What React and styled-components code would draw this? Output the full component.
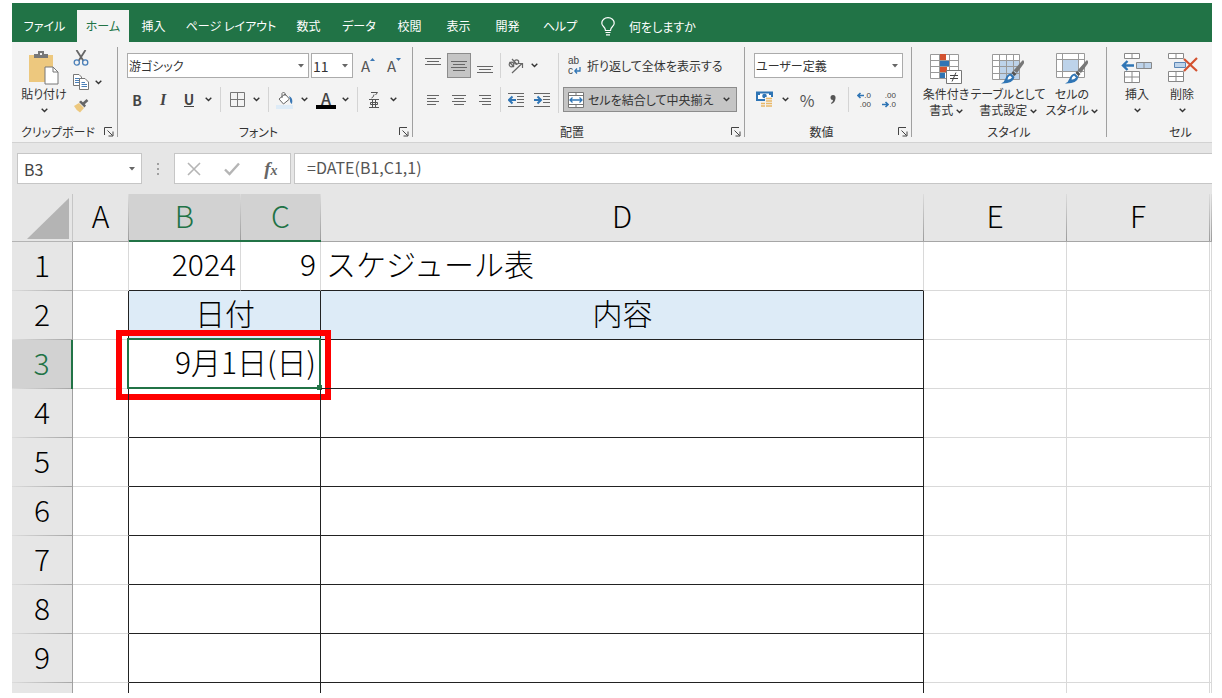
import { useState } from "react";
import styled, { createGlobalStyle, css } from "styled-components";

const TABS = [
  { name: "ファイル", width: 65 },
  { name: "ホーム", width: 52 },
  { name: "挿入", width: 49 },
  { name: "ページ レイアウト", width: 106 },
  { name: "数式", width: 49 },
  { name: "データ", width: 52 },
  { name: "校閲", width: 49 },
  { name: "表示", width: 49 },
  { name: "開発", width: 49 },
  { name: "ヘルプ", width: 56 },
];

// the last row is only partly in view and has no number yet
const EMPTY_ROWS = ["4", "5", "6", "7", "8", "9", ""];

export default function App() {
  const [tab, setTab] = useState("ホーム");
  const [formula, setFormula] = useState("=DATE(B1,C1,1)");

  return (
    <>
      <GlobalStyle />
      <Window>
        <TabBar>
          {TABS.map((item) => (
            <Tab
              key={item.name}
              $width={item.width}
              $active={tab === item.name}
              onClick={() => setTab(item.name)}
            >
              {item.name}
            </Tab>
          ))}
          <TellMe>
            <BulbIcon />
            何をしますか
          </TellMe>
        </TabBar>
        <Ribbon>
          <ClipboardGroup />
          <FontGroup />
          <AlignGroup />
          <NumberGroup />
          <StyleGroup />
          <CellGroup />
        </Ribbon>
        <FormulaBar>
          <NameBox>
            <NameInput aria-label="名前ボックス" defaultValue="B3" />
            <DownArrow />
          </NameBox>
          <Dots>
            <i />
            <i />
            <i />
          </Dots>
          <FormulaButtons>
            <FormulaButton aria-label="キャンセル">
              <svg width="14" height="14" viewBox="0 0 14 14">
                <path d="M1 1L13 13M13 1L1 13" stroke="#b5b5b5" strokeWidth="1.6" />
              </svg>
            </FormulaButton>
            <FormulaButton aria-label="入力">
              <svg width="16" height="14" viewBox="0 0 16 14">
                <path d="M1 7.5L5.5 12L15 1.5" fill="none" stroke="#b5b5b5" strokeWidth="2.4" />
              </svg>
            </FormulaButton>
            <FormulaButton aria-label="関数の挿入">
              <Fx>
                f<small>x</small>
              </Fx>
            </FormulaButton>
          </FormulaButtons>
          <FormulaInput
            aria-label="数式バー"
            value={formula}
            onChange={(e) => setFormula(e.target.value)}
          />
        </FormulaBar>
        <Sheet />
      </Window>
    </>
  );
}

function Group({ label, width, launcher, children }) {
  return (
    <GroupBox $width={width}>
      <GroupBody>{children}</GroupBody>
      <GroupFooter>
        <GroupLabel>{label}</GroupLabel>
        {launcher && (
          <Launcher aria-label={`${label}の設定`}>
            <svg width="10" height="10" viewBox="0 0 10 10">
              <path d="M.5 8V.5H8M3.5 3.5L8.5 8.5M9 4.5V9H4.5" fill="none" stroke="#444" />
            </svg>
          </Launcher>
        )}
      </GroupFooter>
    </GroupBox>
  );
}

function ClipboardGroup() {
  return (
    <Group label="クリップボード" width={106} launcher>
      <PasteButton $width={58}>
        <svg width="32" height="34" viewBox="0 0 32 34">
          <path d="M1 4H25V31H1Z" fill="#edc87e" />
          <path d="M6 7V3H10V0H16V3H20V7Z" fill="#777" />
          <path d="M12 2H14V4H12Z" fill="#f3f3f3" />
          <path d="M17 16H25L30 21V33H17Z" fill="#fff" stroke="#777" />
          <path d="M25 16V21H30" fill="none" stroke="#777" />
        </svg>
        <span>貼り付け</span>
        <Chevron />
      </PasteButton>
      <SmallStack>
        <IconButton $width={16} aria-label="切り取り">
          <svg width="16" height="16" viewBox="0 0 16 16" fill="none">
            <path d="M3.500 0L10.500 11M12.500 0L5.500 11" stroke="#666" strokeWidth="1.800" />
            <circle cx="3.800" cy="12.500" r="2.600" stroke="#4a7fb8" strokeWidth="1.300" />
            <circle cx="12.200" cy="12.500" r="2.600" stroke="#4a7fb8" strokeWidth="1.300" />
          </svg>
        </IconButton>
        <SplitRow>
          <IconButton $width={16} aria-label="コピー">
            <svg width="16" height="16" viewBox="0 0 16 16" fill="#fff" stroke="#777">
              <path d="M.5 .5H6L8.500 3V11.500H.5Z" />
              <path d="M2 4.500H7M2 6.500H7M2 8.500H7" stroke="#4a7fb8" />
              <path d="M6.500 4.500H12L15.500 8V15.500H6.500Z" />
              <path d="M8.500 8.500H12M8.500 10.500H14M8.500 12.500H14" stroke="#4a7fb8" />
            </svg>
          </IconButton>
          <ChevronButton aria-label="コピーのオプション" />
        </SplitRow>
        <IconButton $width={16} aria-label="書式のコピー">
          <svg width="16" height="14" viewBox="0 0 16 14">
            <path d="M1 7L6 4L11 9L7 13.500Q3 11 1 7Z" fill="#edc87e" />
            <path d="M6 3L8 1.500L13 6.500L11.500 8.500Z" fill="#666" />
            <path d="M10 5L14.500 1" stroke="#666" strokeWidth="2.600" />
          </svg>
        </IconButton>
      </SmallStack>
    </Group>
  );
}

function FontGroup() {
  return (
    <Group label="フォント" width={295} launcher>
      <Column $left={9}>
        <Row $gap={2}>
          <Dropdown label="フォント名" value="游ゴシック" width={182} />
          <Dropdown label="フォント サイズ" value="11" width={42} large />
          <IconButton $width={26} aria-label="フォント サイズの拡大">
            <SizeLetter>A</SizeLetter>
            <svg width="5" height="15" viewBox="0 0 5 15">
              <path d="M0 3L2.500 0L5 3Z" fill="#3b78b5" />
            </svg>
          </IconButton>
          <IconButton $width={22} aria-label="フォント サイズの縮小">
            <SizeLetter>A</SizeLetter>
            <svg width="5" height="15" viewBox="0 0 5 15">
              <path d="M0 0H5L2.500 3Z" fill="#3b78b5" />
            </svg>
          </IconButton>
        </Row>
        <Row $gap={6}>
          <IconButton $width={20} aria-label="太字">
            <Letter $bold>B</Letter>
          </IconButton>
          <IconButton $width={20} aria-label="斜体">
            <Letter $italic>I</Letter>
          </IconButton>
          <SplitRow>
            <IconButton $width={20} aria-label="下線">
              <Letter $underline>U</Letter>
            </IconButton>
            <ChevronButton aria-label="下線のオプション" />
          </SplitRow>
          <Divider />
          <SplitRow>
            <IconButton $width={20} aria-label="罫線">
              <svg width="15" height="15" viewBox="0 0 15 15" fill="none" stroke="#777">
                <path d="M.5 .5H14.500V14.500H.5ZM7.500 .5V14.500M.5 7.500H14.500" />
              </svg>
            </IconButton>
            <ChevronButton aria-label="罫線のオプション" />
          </SplitRow>
          <Divider />
          <SplitRow>
            <IconButton $width={20} aria-label="塗りつぶしの色">
              <svg width="18" height="18" viewBox="0 0 18 18">
                <path d="M0 14H17V18H0Z" fill="#ddebf7" />
                <path d="M3 8L9 3L13.500 8L7.500 13Z" fill="#fff" stroke="#666" />
                <path d="M6 7V2.500Q7.500 -.5 9 2.500V5" fill="none" stroke="#666" />
                <path d="M13 5Q17.500 7 16 13Q13.500 12 14 8Z" fill="#3b78b5" />
              </svg>
            </IconButton>
            <ChevronButton aria-label="塗りつぶしのオプション" />
          </SplitRow>
          <SplitRow>
            <ColorButton aria-label="フォントの色">A</ColorButton>
            <ChevronButton aria-label="フォントの色のオプション" />
          </SplitRow>
          <Divider />
          <SplitRow>
            <IconButton $width={20} aria-label="ふりがな">
              <svg width="10" height="16" viewBox="0 0 10 16" fill="none" stroke="#555">
                <path d="M2 .5H8.500L6.500 3M5 2.500Q5 5 2.500 6" />
                <path d="M0 7.500H10M1.500 10.500V12.500H8.500V10.500ZM3.500 7.500V15M6.500 7.500V15M0 15.500H10" />
              </svg>
            </IconButton>
            <ChevronButton aria-label="ふりがなのオプション" />
          </SplitRow>
        </Row>
      </Column>
    </Group>
  );
}

function Lines({ d }) {
  return (
    <svg width="16" height="16" viewBox="0 0 16 16" stroke="#666">
      <path d={d} />
    </svg>
  );
}

function Indent({ flip }) {
  return (
    <svg width="16" height="14" viewBox="0 0 16 14" fill="none">
      <path d="M0 .5H16M9 3.500H16M9 6.500H16M9 9.500H16M0 13.500H16" stroke="#666" />
      <path
        d={flip ? "M0 7H6M3.500 3.500L7 7L3.500 10.500" : "M8 7H2M4.500 3.500L1 7L4.500 10.500"}
        stroke="#2f75b5"
        strokeWidth="2"
      />
    </svg>
  );
}

function AlignGroup() {
  return (
    <Group label="配置" width={332} launcher>
      <Column $left={8}>
        <Row $gap={2}>
          <IconButton $width={24} aria-label="上揃え">
            <Lines d="M0 .5H16M2 3.500H14M0 6.500H16" />
          </IconButton>
          <IconButton $width={24} $pressed aria-label="上下中央揃え">
            <Lines d="M0 3.500H16M2 6.500H14M0 9.500H16M2 12.500H14" />
          </IconButton>
          <IconButton $width={24} aria-label="下揃え">
            <Lines d="M0 8.500H16M2 11.500H14M0 14.500H16" />
          </IconButton>
          <Divider $side={1} />
          <IconButton $width={24} aria-label="方向">
            <svg width="18" height="16" viewBox="0 0 18 16" fill="none" stroke="#666" strokeWidth="1.200">
              <ellipse cx="4.500" cy="6.500" rx="2.300" ry="2.300" />
              <path d="M2.500 4L7 9" />
              <path d="M5 1L10 6.500" />
              <ellipse cx="9.500" cy="4" rx="2.200" ry="2.200" />
              <path d="M5 15L15 5.500M11 5.500H15.500V10" />
            </svg>
          </IconButton>
          <ChevronButton $tight aria-label="方向のオプション" />
        </Row>
        <Row $gap={2}>
          <IconButton $width={24} aria-label="左揃え">
            <Lines d="M2 3.500H14M2 6.500H11M2 9.500H14M2 12.500H11" />
          </IconButton>
          <IconButton $width={24} aria-label="中央揃え">
            <Lines d="M1 3.500H15M3 6.500H13M1 9.500H15M3 12.500H13" />
          </IconButton>
          <IconButton $width={24} aria-label="右揃え">
            <Lines d="M2 3.500H14M5 6.500H14M2 9.500H14M5 12.500H14" />
          </IconButton>
          <Divider $side={1} />
          <IconButton $width={24} aria-label="インデントを減らす">
            <Indent />
          </IconButton>
          <IconButton $width={24} aria-label="インデントを増やす">
            <Indent flip />
          </IconButton>
        </Row>
      </Column>
      <TallDivider />
      <Column>
        <WideButton>
          <WrapMark>
            <span>ab</span>
            <span>
              c
              <svg width="7" height="7" viewBox="0 0 7 7" fill="none" stroke="#2f75b5" strokeWidth="1.300">
                <path d="M6 0V4H1M3 1.500L.8 4L3 6.500" />
              </svg>
            </span>
          </WrapMark>
          折り返して全体を表示する
        </WideButton>
        <WideButton $pressed>
          <svg width="16" height="16" viewBox="0 0 16 16" fill="#fff" stroke="#777">
            <path d="M.5 .5H15.500V15.500H.5Z" />
            <path d="M.5 3.500H15.500M.5 12.500H15.500M8 .5V3.500M8 12.500V15.500" />
            <path d="M2 8H14M4.500 5.500L2 8L4.500 10.500M11.500 5.500L14 8L11.500 10.500" fill="none" stroke="#2f75b5" strokeWidth="1.300" />
          </svg>
          <span>セルを結合して中央揃え</span>
          <Chevron />
        </WideButton>
      </Column>
    </Group>
  );
}

function NumberGroup() {
  return (
    <Group label="数値" width={167} launcher>
      <Column $left={9}>
        <Row>
          <Dropdown label="表示形式" value="ユーザー定義" width={149} />
        </Row>
        <Row $gap={5}>
          <SplitRow>
            <IconButton $width={22} aria-label="通貨表示形式">
              <svg width="18" height="17" viewBox="0 0 18 17">
                <path d="M0 .5H17V10H0Z" fill="#2f75b5" />
                <path d="M2 2.500H15V8H2Z" fill="#fff" />
                <circle cx="8.500" cy="5" r="2.300" fill="#2f75b5" />
                <path d="M1 2H4V4H1ZM13 2H16V4H13Z" fill="#2f75b5" />
                <path d="M9 6H17V16H5V11H9Z" fill="#f3f3f3" />
                <path d="M10 7.500H16M10 10H16M10 12.500H16M10 15H16M5 12.500H9M5 15H9" stroke="#e9b867" strokeWidth="1.600" />
              </svg>
            </IconButton>
            <ChevronButton aria-label="通貨のオプション" />
          </SplitRow>
          <IconButton $width={22} aria-label="パーセント スタイル">
            <Percent>%</Percent>
          </IconButton>
          <IconButton $width={20} aria-label="桁区切りスタイル">
            <svg width="6" height="9" viewBox="0 0 6 9">
              <path d="M3 0Q6 0 5.500 3.500Q5 7.500 1.500 9L1 8Q3 7 3 5Q.5 5 .5 2.500Q.5 0 3 0Z" fill="#555" />
            </svg>
          </IconButton>
          <Divider />
          <IconButton $width={20} aria-label="小数点以下の表示桁数を増やす">
            <Decimals>
              <span>
                <SmallArrow left />
                .0
              </span>
              <span>.00</span>
            </Decimals>
          </IconButton>
          <IconButton $width={20} aria-label="小数点以下の表示桁数を減らす">
            <Decimals>
              <span>.00</span>
              <span>
                <SmallArrow />
                .0
              </span>
            </Decimals>
          </IconButton>
        </Row>
      </Column>
    </Group>
  );
}

function StyleGroup() {
  return (
    <Group label="スタイル" width={195}>
      <BigRow>
        <BigButton $width={54}>
          <svg width="32" height="32" viewBox="0 0 32 32">
            <path d="M.5 1.500H28.500V25.500H.5Z" fill="#fff" stroke="#999" />
            <path d="M10 1H16V7H10Z" fill="#d35230" />
            <path d="M10 7H19V13H10Z" fill="#2f75b5" />
            <path d="M10 13H17V19H10Z" fill="#d35230" />
            <path d="M10 19H15V25H10Z" fill="#2f75b5" />
            <path d="M.5 7.500H28.500M.5 13.500H28.500M.5 19.500H28.500M9.500 1V26M19.500 1V26" stroke="#999" fill="none" />
            <path d="M16.500 17.500H31.500V30.500H16.500Z" fill="#fff" stroke="#777" />
            <path d="M20 22.500H28M20 25.500H28M26 19.500L22 28.500" stroke="#444" />
          </svg>
          <span>条件付き</span>
          <span>
            書式 <Chevron />
          </span>
        </BigButton>
        <BigButton $width={70}>
          <svg width="32" height="32" viewBox="0 0 32 32">
            <path d="M.5 1.500H27.500V26.500H.5Z" fill="#fff" />
            <path d="M7 8H28V27H7Z" fill="#bdd3ea" />
            <path d="M.5 1.500H27.500V26.500H.5ZM.5 7.500H27.500M.5 13.500H27.500M.5 20.500H27.500M7.500 1V26M14.500 1V26M21.500 1V26" stroke="#999" fill="none" />
            <Brush />
          </svg>
          <span>テーブルとして</span>
          <span>
            書式設定 <Chevron />
          </span>
        </BigButton>
        <BigButton $width={58}>
          <svg width="32" height="32" viewBox="0 0 32 32">
            <path d="M.5 .5H28.500V24.500H.5Z" fill="#fff" />
            <path d="M7 6H22V19H7Z" fill="#bdd3ea" />
            <path d="M.5 .5H28.500V24.500H.5ZM.5 6.500H28.500M.5 18.500H28.500M6.500 0V24M22.500 0V24" stroke="#999" fill="none" />
            <Brush />
          </svg>
          <span>セルの</span>
          <span>
            スタイル <Chevron />
          </span>
        </BigButton>
      </BigRow>
    </Group>
  );
}

function CellGroup() {
  return (
    <Group label="セル" width={148}>
      <BigRow>
        <BigButton $width={46}>
          <svg width="32" height="32" viewBox="0 0 32 32" fill="#fff" stroke="#888">
            <path d="M3.500 .5H18.500V5.500H3.500ZM11 .5V5.500" />
            <path d="M15.500 9.500H30.500V15.500H15.500ZM23 9.500V15.500" fill="#bdd3ea" />
            <path d="M3.500 18.500H18.500V29.500H3.500ZM11 18.500V29.500M3.500 24H18.500" />
            <path d="M13 12.500H2M6.500 8L2 12.500L6.500 17" fill="none" stroke="#2f75b5" strokeWidth="2.400" />
          </svg>
          <span>挿入</span>
          <Chevron />
        </BigButton>
        <BigButton $width={44}>
          <svg width="32" height="32" viewBox="0 0 32 32" fill="#fff" stroke="#888">
            <path d="M2.500 .5H17.500V5.500H2.500ZM10 .5V5.500" />
            <path d="M8.500 9.500H19.500V14.500H8.500Z" fill="#bdd3ea" stroke="#5b86b5" />
            <path d="M2.500 18.500H17.500V28.500H2.500ZM10 18.500V28.500M2.500 23.500H17.500" />
            <path d="M18 6L31 18M31 5L18 18" fill="none" stroke="#d35230" strokeWidth="2.200" />
          </svg>
          <span>削除</span>
          <Chevron />
        </BigButton>
      </BigRow>
    </Group>
  );
}

function Brush() {
  return (
    <g stroke="none">
      <path d="M31 7Q33 9 31.500 11L25 20L21.500 17.500L29 9Z" fill="#777" />
      <path d="M21 18L24.500 21L22.500 23L19.500 20Z" fill="#555" />
      <path d="M19 20.500L22.500 24Q21 31 9 30.500Q12.500 29 13.500 25.500Q15 21 19 20.500Z" fill="#2f75b5" />
      <path d="M18 22.500L20 24.500Q18 27 15.500 26.500Q15.500 24 18 22.500Z" fill="#fff" />
    </g>
  );
}

function SmallArrow({ left }) {
  return (
    <svg width="7" height="7" viewBox="0 0 7 7" fill="none" stroke="#2f75b5" strokeWidth="1.600">
      <path d={left ? "M7 3.500H1M3.500 1L1 3.500L3.500 6" : "M0 3.500H6M3.500 1L6 3.500L3.500 6"} />
    </svg>
  );
}

function BulbIcon() {
  return (
    <svg width="14" height="19" viewBox="0 0 14 19" fill="none" stroke="#fff" strokeWidth="1.200">
      <path d="M4.500 13.500Q4.500 11.500 2.500 9.500Q.8 7.800 .8 6.200A6.200 5.600 0 0 1 13.200 6.200Q13.200 7.800 11.500 9.500Q9.500 11.500 9.500 13.500ZM4.500 15.500H9.500M5 17.800H9" />
    </svg>
  );
}

function Chevron() {
  return (
    <svg width="7" height="5" viewBox="0 0 7 5">
      <path d="M.7 .8L3.500 3.600L6.300 .8" fill="none" stroke="#333" strokeWidth="1.400" />
    </svg>
  );
}

function ChevronButton(props) {
  return (
    <ChevronBox {...props}>
      <Chevron />
    </ChevronBox>
  );
}

function DownArrow() {
  return (
    <svg width="6" height="4" viewBox="0 0 6 4">
      <path d="M0 0H6L3 3.500Z" fill="#666" />
    </svg>
  );
}

function Dropdown({ label, value, width, large }) {
  return (
    <SelectBox $width={width}>
      <Select aria-label={label} defaultValue={value} $large={large}>
        <option>{value}</option>
      </Select>
      <DownArrow />
    </SelectBox>
  );
}

function Sheet() {
  return (
    <SheetArea>
      <Grid>
        <colgroup>
          <Col $width={61} />
          <Col $width={56} />
          <Col $width={112} />
          <Col $width={80} />
          <Col $width={603} />
          <Col $width={143} />
          <Col $width={143} />
          <col />
        </colgroup>
        <thead>
          <tr>
            <Corner>
              <svg width="42" height="41" viewBox="0 0 42 41">
                <path d="M42 0V41H0Z" fill="#b4b4b4" />
              </svg>
            </Corner>
            <ColHead>A</ColHead>
            <ColHead $selected>B</ColHead>
            <ColHead $selected>C</ColHead>
            <ColHead>D</ColHead>
            <ColHead>E</ColHead>
            <ColHead>F</ColHead>
            <ColHead />
          </tr>
        </thead>
        <tbody>
          <tr>
            <RowHead>1</RowHead>
            <Cell />
            <Cell $align="right" $lineBottom>
              2024
            </Cell>
            <Cell $align="right" $lineBottom>
              9
            </Cell>
            <Cell $lineBottom>スケジュール表</Cell>
            <Cell />
            <Cell />
            <Cell />
          </tr>
          <tr>
            <RowHead>2</RowHead>
            <Cell $lineRight />
            <Cell colSpan={2} $align="center" $filled $lineRight $lineBottom>
              日付
            </Cell>
            <Cell $align="center" $filled $lineRight $lineBottom>
              内容
            </Cell>
            <Cell />
            <Cell />
            <Cell />
          </tr>
          <tr>
            <RowHead $selected>3</RowHead>
            <Cell $lineRight />
            <Cell colSpan={2} $align="right" $lineRight $lineBottom>
              9月1日(日)
              <Selection />
              <Highlight />
            </Cell>
            <Cell $lineRight $lineBottom />
            <Cell />
            <Cell />
            <Cell />
          </tr>
          {EMPTY_ROWS.map((row) => (
            <tr key={row}>
              <RowHead>{row}</RowHead>
              <Cell $lineRight />
              <Cell colSpan={2} $lineRight $lineBottom />
              <Cell $lineRight $lineBottom />
              <Cell />
              <Cell />
              <Cell />
            </tr>
          ))}
        </tbody>
      </Grid>
    </SheetArea>
  );
}

const GlobalStyle = createGlobalStyle`
  * {
    box-sizing: border-box;
  }
  body {
    margin: 0;
    background: #fff;
    color: #333;
    font-family: "Noto Sans CJK JP", "Noto Sans", sans-serif;
    font-size: 12px;
  }
  button, input, select {
    margin: 0;
    padding: 0;
    border: 0;
    background: none;
    color: inherit;
    font: inherit;
    font-feature-settings: inherit;
  }
  svg {
    flex: none;
  }
`;

const Window = styled.div`
  display: flex;
  flex-direction: column;
  height: 100vh;
  padding: 3px 10px 5px 12px;
  overflow: hidden;
  font-feature-settings: "palt";
`;

const TabBar = styled.nav`
  display: flex;
  align-items: flex-end;
  flex: none;
  height: 39px;
  background: #217346;
  color: #fff;
`;

const Tab = styled.button`
  width: ${(props) => props.$width}px;
  height: 32px;
  line-height: 30px;
  white-space: nowrap;
  ${(props) =>
    props.$active &&
    css`
      background: #f3f3f3;
      color: #217346;
    `}
`;

const TellMe = styled.button`
  display: flex;
  align-items: center;
  gap: 14px;
  height: 32px;
  padding-left: 13px;
`;

const Ribbon = styled.div`
  display: flex;
  flex: none;
  height: 101px;
  padding: 5px 0;
  overflow: hidden;
  background: #f3f3f3;
  border-bottom: 1px solid #d2d2d2;
`;

const GroupBox = styled.section`
  display: flex;
  flex-direction: column;
  flex: none;
  width: ${(props) => props.$width}px;
  border-right: 1px solid #a0a0a0;
`;

const GroupBody = styled.div`
  display: flex;
  flex: 1;
  min-height: 0;
`;

const GroupFooter = styled.div`
  display: flex;
  align-items: center;
  height: 10px;
`;

const GroupLabel = styled.span`
  flex: 1;
  text-align: center;
  line-height: 10px;
`;

const Launcher = styled.button`
  display: flex;
  margin-right: 3px;
`;

const Column = styled.div`
  display: flex;
  flex-direction: column;
  gap: 9px;
  padding: 6px 0 0 ${(props) => props.$left || 0}px;
`;

const Row = styled.div`
  display: flex;
  align-items: center;
  gap: ${(props) => props.$gap || 0}px;
  height: 25px;
`;

const SplitRow = styled.div`
  display: flex;
  align-items: center;
  gap: 3px;
`;

const Divider = styled.span`
  width: 1px;
  height: 25px;
  margin: 0 ${(props) => props.$side || 0}px;
  background: #d4d4d4;
`;

const TallDivider = styled.span`
  width: 1px;
  height: 60px;
  margin: 6px 4px 0;
  background: #d4d4d4;
`;

const IconButton = styled.button`
  display: flex;
  align-items: center;
  justify-content: center;
  width: ${(props) => props.$width}px;
  height: 25px;
  ${(props) =>
    props.$pressed &&
    css`
      background: #c5c5c5;
      border: 1px solid #8c8c8c;
    `}
`;

const ChevronBox = styled.button`
  display: flex;
  align-items: center;
  justify-content: center;
  width: ${(props) => (props.$tight ? 8 : 12)}px;
  height: 25px;
`;

const Letter = styled.span`
  color: #444;
  font-size: 14px;
  font-weight: 700;
  line-height: 16px;
  ${(props) =>
    props.$italic &&
    css`
      font-family: "Liberation Serif", serif;
      font-size: 16px;
      font-style: italic;
    `}
  ${(props) =>
    props.$underline &&
    css`
      border-bottom: 1px solid #444;
      line-height: 14px;
    `}
`;

const SizeLetter = styled.span`
  color: #555;
  font-size: 15px;
  line-height: 20px;
`;

const ColorButton = styled.button`
  width: 20px;
  height: 19px;
  border-bottom: 4px solid #000;
  color: #444;
  font-size: 16px;
  font-weight: 500;
  line-height: 14px;
`;

const Percent = styled.span`
  font-size: 16px;
  line-height: 20px;
  color: #555;
`;

const Decimals = styled.span`
  display: flex;
  flex-direction: column;
  align-items: flex-end;
  color: #444;
  font-family: "Liberation Sans", sans-serif;
  font-size: 8px;
  line-height: 9px;

  span {
    display: flex;
    align-items: center;
  }
`;

const SelectBox = styled.div`
  display: grid;
  grid-template-columns: 1fr 14px;
  align-items: center;
  width: ${(props) => props.$width}px;
  height: 25px;
  border: 1px solid #ababab;
  background: #fff;

  svg {
    grid-area: 1 / 2;
    justify-self: center;
    pointer-events: none;
  }
`;

const Select = styled.select`
  grid-area: 1 / 1 / 2 / 3;
  height: 23px;
  padding: 0 1px;
  appearance: none;
  font-size: ${(props) => (props.$large ? 14 : 12)}px;
`;

const WideButton = styled.button`
  display: flex;
  align-items: center;
  gap: 4px;
  width: 174px;
  height: 25px;
  padding: 0 6px 0 4px;
  border: 1px solid transparent;
  white-space: nowrap;

  span + svg {
    margin-left: auto;
  }
  ${(props) =>
    props.$pressed &&
    css`
      background: #c5c5c5;
      border-color: #8c8c8c;
    `}
`;

const WrapMark = styled.span`
  display: flex;
  flex-direction: column;
  width: 15px;
  color: #444;
  font-family: "Liberation Sans", sans-serif;
  font-size: 10px;
  line-height: 10px;
  text-align: left;

  span {
    display: flex;
    align-items: center;
    gap: 1px;
    height: 10px;
  }
`;

const BigRow = styled.div`
  display: flex;
  padding-left: 7px;
  padding-top: 4px;
`;

const BigButton = styled.button`
  display: flex;
  flex-direction: column;
  align-items: center;
  flex: none;
  width: ${(props) => props.$width}px;
  height: 72px;
  padding-top: 2px;
  line-height: 16px;
  white-space: nowrap;

  > svg + span {
    margin-top: 1px;
  }
  > span svg {
    vertical-align: middle;
  }
  > span + svg {
    margin-top: 6px;
  }
`;

const PasteButton = styled(BigButton)`
  margin: 2px 0 0 3px;
`;

const SmallStack = styled.div`
  display: flex;
  flex-direction: column;
  gap: 2px;

  button {
    height: 22px;
  }
`;

const FormulaBar = styled.div`
  display: flex;
  flex: none;
  height: 51px;
  padding: 10px 0 10px 5px;
  background: #e6e6e6;
  color: #444;
  font-size: 16px;
`;

const NameBox = styled.div`
  display: flex;
  align-items: center;
  width: 125px;
  padding: 0 6px;
  border: 1px solid #c6c6c6;
  background: #fff;
`;

const NameInput = styled.input`
  flex: 1;
  min-width: 0;
`;

const Dots = styled.span`
  display: flex;
  flex-direction: column;
  align-items: center;
  justify-content: center;
  gap: 3px;
  width: 32px;

  i {
    width: 2px;
    height: 2px;
    background: #a0a0a0;
  }
`;

const FormulaButtons = styled.div`
  display: flex;
  align-items: center;
  justify-content: space-around;
  width: 117px;
  margin-right: 3px;
  border: 1px solid #c6c6c6;
  background: #fff;
`;

const FormulaButton = styled.button`
  display: flex;
  align-items: center;
  justify-content: center;
  width: 32px;
  height: 26px;
`;

const Fx = styled.span`
  color: #666;
  font-family: "Liberation Serif", serif;
  font-size: 19px;
  font-style: italic;
  font-weight: 700;

  small {
    font-size: 14px;
  }
`;

const FormulaInput = styled.input`
  flex: 1;
  min-width: 0;
  padding: 0 0 3px 12px;
  border: 1px solid #c6c6c6;
  border-right: 0;
  background: #fff;
  color: #555;
`;

const SheetArea = styled.div`
  flex: 1;
  min-height: 0;
  overflow: hidden;
  background: #fff;
`;

const Grid = styled.table`
  width: 100%;
  table-layout: fixed;
  border-collapse: separate;
  border-spacing: 0;
  color: #000;
  font-size: 30px;
  font-weight: 300;
  line-height: 40px;
  font-feature-settings: normal;
`;

const Col = styled.col`
  width: ${(props) => props.$width}px;
`;

const Corner = styled.td`
  height: 48px;
  padding: 0 3px 2px 0;
  border-right: 1px solid #c6c6c6;
  border-bottom: 1px solid #b4b4b4;
  background: #e6e6e6;
  line-height: 0;
  text-align: right;
  vertical-align: bottom;
`;

const ColHead = styled.th`
  height: 48px;
  padding: 0 1px 5px 0;
  border-bottom: 1px solid #a6a6a6;
  background: linear-gradient(#dcdcdc, #9c9c9c) right / 1px 100% no-repeat #e6e6e6;
  font-weight: 300;
  ${(props) =>
    props.$selected &&
    css`
      border-bottom: 2px solid #217346;
      background-color: #d2d2d2;
      color: #217346;
    `}
`;

const RowHead = styled.th`
  height: 49px;
  padding: 0 0 6px;
  border-right: 1px solid #a0a0a0;
  background: linear-gradient(90deg, #dcdcdc, #a6a6a6) bottom / 100% 1px no-repeat #e6e6e6;
  font-weight: 300;
  ${(props) =>
    props.$selected &&
    css`
      border-right: 2px solid #217346;
      background-color: #d2d2d2;
      color: #217346;
    `}
`;

const Cell = styled.td`
  position: relative;
  height: 49px;
  padding: 0 4px 6px 5px;
  border-right: 1px solid ${(props) => (props.$lineRight ? "#222" : "#d9d9d9")};
  border-bottom: 1px solid ${(props) => (props.$lineBottom ? "#222" : "#d9d9d9")};
  background: ${(props) => (props.$filled ? "#ddebf7" : "transparent")};
  text-align: ${(props) => props.$align || "left"};
  white-space: nowrap;
`;

// Sits on the cell borders, with the fill handle in its lower right corner.
const Selection = styled.span`
  position: absolute;
  inset: -2px -1px -1px -2px;
  border: 2px solid #217346;

  &::after {
    content: "";
    position: absolute;
    right: -3px;
    bottom: -3px;
    width: 5px;
    height: 5px;
    background: #217346;
  }
`;

const Highlight = styled.span`
  position: absolute;
  inset: -10px -11px -12px -13px;
  border: 6px solid #ff0000;
`;
